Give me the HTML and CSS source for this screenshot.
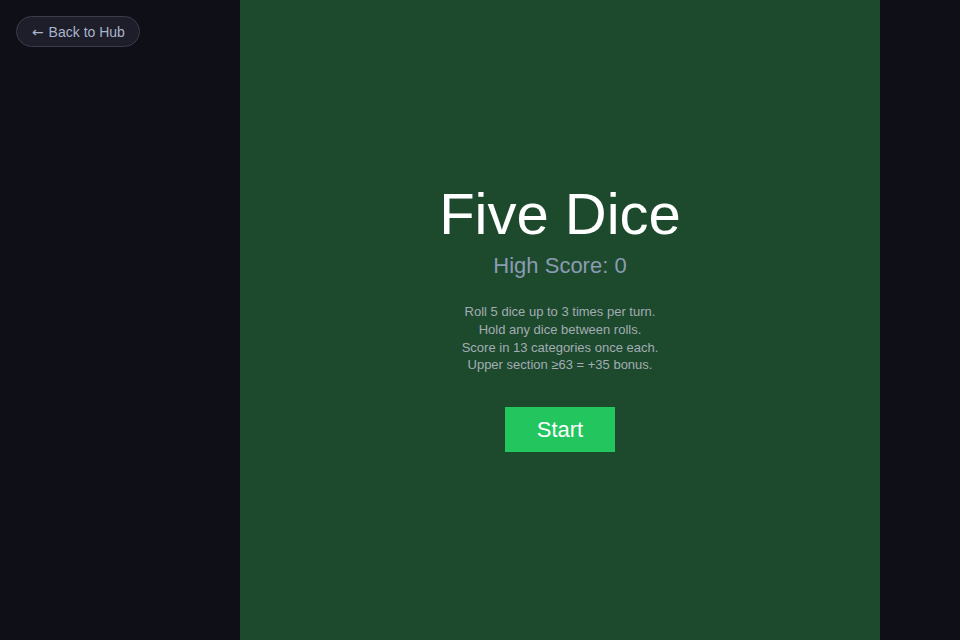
FILE: index.html
```html
<!DOCTYPE html>
<html lang="en">
<head>
<meta charset="utf-8">
<title>Five Dice</title>
<link rel="stylesheet" href="styles.css">
</head>
<body>
<a class="back-btn" href="#"><span class="arrow">←</span> Back to Hub</a>
<main class="stage">
  <section class="game">
    <div class="intro">
      <h1 class="title">Five Dice</h1>
      <p class="high-score">High Score: 0</p>
      <div class="rules">
        <p>Roll 5 dice up to 3 times per turn.</p>
        <p>Hold any dice between rolls.</p>
        <p>Score in 13 categories once each.</p>
        <p>Upper section ≥63 = +35 bonus.</p>
      </div>
      <button class="start-btn" type="button">Start</button>
    </div>
  </section>
</main>
</body>
</html>
```
FILE: styles.css
```css
* { box-sizing: border-box; }
html, body {
  margin: 0;
  padding: 0;
  width: 960px;
  height: 640px;
  overflow: hidden;
}
body {
  background: #0f0f18;
  font-family: "Liberation Sans", Arial, sans-serif;
  position: relative;
}
.back-btn {
  position: absolute;
  top: 16px;
  left: 16px;
  height: 31px;
  padding: 0 14px 0 15px;
  display: flex;
  align-items: center;
  border-radius: 16px;
  background: #1d1e29;
  border: 1px solid #3a3c4a;
  color: #aab4cc;
  font-size: 14px;
  text-decoration: none;
  z-index: 2;
  white-space: pre;
}
.arrow {
  font-family: "DejaVu Sans", sans-serif;
  font-size: 14px;
  margin-right: 1px;
}
.stage {
  display: flex;
  justify-content: flex-start;
  padding-left: 240px;
  height: 640px;
}
.game {
  width: 640px;
  height: 640px;
  background: #1d4a2d;
  display: flex;
  align-items: center;
  justify-content: center;
}
.intro {
  display: flex;
  flex-direction: column;
  align-items: center;
  text-align: center;
  margin-top: -8px;
}
.title {
  margin: 0;
  font-size: 58px;
  font-weight: 400;
  color: #ffffff;
  line-height: 67px;
}
.high-score {
  margin: 6px 0 0;
  font-size: 22px;
  line-height: 25px;
  color: #8b9bb3;
}
.rules {
  margin-top: 25px;
  font-size: 13px;
  line-height: 17.7px;
  color: #a3acb4;
}
.rules p { margin: 0; }
.start-btn {
  margin-top: 33px;
  border: none;
  background: #22c55e;
  color: #ffffff;
  font-family: "Liberation Sans", Arial, sans-serif;
  font-size: 22px;
  line-height: 25px;
  padding: 10px 32px;
  border-radius: 0;
  cursor: pointer;
}
```
